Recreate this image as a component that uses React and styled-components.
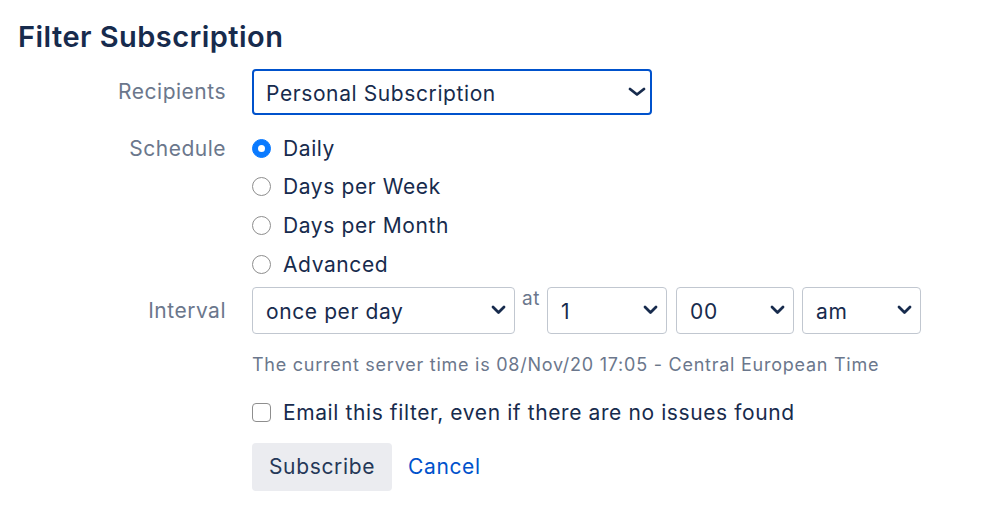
import React from "react";
import styled, { createGlobalStyle } from "styled-components";

const Global = createGlobalStyle`
  html, body { margin: 0; padding: 0; background: #ffffff; }
  body { font-family: Inter, "Noto Sans", "Liberation Sans", sans-serif; color: #172b4d; letter-spacing: 0.6px; }
  * { box-sizing: border-box; }
`;

const Page = styled.div`
  padding: 19px 18px 0 18px;
  width: 999px;
  height: 520px;
`;

const Title = styled.h2`
  margin: 0 0 14px 0;
  font-size: 29px;
  line-height: 36px;
  font-weight: 600;
  color: #172b4d;
  letter-spacing: 0.45px;
`;

const Row = styled.div`
  display: flex;
  align-items: flex-start;
  column-gap: 26px;
  margin-top: ${(p) => p.$mt || 0}px;
`;

const Label = styled.div`
  width: 208px;
  flex: none;
  text-align: right;
  font-size: 21px;
  letter-spacing: 0.5px;
  color: #6b778c;
  line-height: ${(p) => p.$lh}px;
`;

const Field = styled.div`
  flex: 1;
  display: flex;
  align-items: flex-start;
`;

const SelectWrap = styled.div`
  position: relative;
  width: ${(p) => p.$w}px;
  height: ${(p) => p.$h}px;
  flex: none;
`;

const NativeSelect = styled.select`
  appearance: none;
  -webkit-appearance: none;
  width: 100%;
  height: 100%;
  margin: 0;
  padding: 2px 36px 0 ${(p) => (p.$focus ? 12 : 13)}px;
  font-family: inherit;
  font-size: 21px;
  letter-spacing: 0.6px;
  color: #172b4d;
  background: #ffffff;
  border: ${(p) => (p.$focus ? "2px solid #0052cc" : "1px solid #c1c7d0")};
  border-radius: 4px;
  outline: none;
`;

const Chevron = styled.svg`
  position: absolute;
  right: ${(p) => p.$r}px;
  top: 50%;
  margin-top: -5px;
  width: ${(p) => p.$cw}px;
  height: 10px;
  pointer-events: none;
`;

const ChevronIcon = ({ r = 9, cw = 15 }) => (
  <Chevron $r={r} $cw={cw} viewBox={`0 0 ${cw} 10`}>
    <path d={`M2 2 L${cw / 2} 7.5 L${cw - 2} 2`} fill="none" stroke="#172b4d" strokeWidth="2.8" strokeLinecap="round" strokeLinejoin="round" />
  </Chevron>
);

const Select = ({ w, h = 47, value, focus, r, cw }) => (
  <SelectWrap $w={w} $h={h}>
    <NativeSelect $focus={focus} defaultValue={value}>
      <option>{value}</option>
    </NativeSelect>
    <ChevronIcon r={r} cw={cw} />
  </SelectWrap>
);

const RadioList = styled.div`
  display: flex;
  flex-direction: column;
`;

const Option = styled.label`
  display: flex;
  align-items: center;
  height: ${(p) => p.$h || 38.67}px;
  gap: 12px;
  font-size: 21px;
  color: #172b4d;
`;

const Radio = styled.span`
  width: 19px;
  height: 19px;
  border-radius: 50%;
  flex: none;
  background: ${(p) => (p.$on ? "#0a7aff" : "#ffffff")};
  border: 1px solid ${(p) => (p.$on ? "#0a7aff" : "#8e8e8e")};
  display: flex;
  align-items: center;
  justify-content: center;
  &::after {
    content: "";
    display: ${(p) => (p.$on ? "block" : "none")};
    width: 7px;
    height: 7px;
    border-radius: 50%;
    background: #ffffff;
  }
`;

const Check = styled.span`
  width: 19px;
  height: 19px;
  flex: none;
  border-radius: 4px;
  border: 1px solid #8e8e8e;
  background: #ffffff;
`;

const At = styled.span`
  font-size: 19px;
  line-height: 24px;
  color: #6b778c;
  margin: 0 7px;
`;

const Gap = styled.span`
  width: ${(p) => p.$w}px;
  flex: none;
`;

const Hint = styled.div`
  font-size: 18px;
  line-height: 24px;
  letter-spacing: 0.75px;
  color: #6b778c;
`;

const Buttons = styled.div`
  display: flex;
  align-items: center;
  gap: 16px;
`;

const Button = styled.button`
  height: 48px;
  padding: 0 17px;
  border: none;
  border-radius: 4px;
  background: #ebecf0;
  color: #253858;
  font-family: inherit;
  font-size: 21px;
  letter-spacing: 0.65px;
`;

const LinkButton = styled.a`
  font-size: 21px;
  color: #0052cc;
  text-decoration: none;
`;

export default function App() {
  return (
    <>
      <Global />
      <Page>
        <Title>Filter Subscription</Title>
        <Row>
          <Label $lh={46}>Recipients</Label>
          <Field>
            <Select w={400} h={46} value="Personal Subscription" focus r={6} cw={18} />
          </Field>
        </Row>
        <Row $mt={14}>
          <Label $lh={39}>Schedule</Label>
          <Field>
            <RadioList>
              <Option><Radio $on />Daily</Option>
              <Option><Radio />Days per Week</Option>
              <Option><Radio />Days per Month</Option>
              <Option><Radio />Advanced</Option>
            </RadioList>
          </Field>
        </Row>
        <Row $mt={3}>
          <Label $lh={47}>Interval</Label>
          <Field>
            <Select w={263} value="once per day" />
            <At>at</At>
            <Select w={120} value="1" />
            <Gap $w={9} />
            <Select w={118} value="00" />
            <Gap $w={8} />
            <Select w={119} value="am" />
          </Field>
        </Row>
        <Row $mt={19}>
          <Label />
          <Field>
            <Hint>The current server time is 08/Nov/20 17:05 - Central European Time</Hint>
          </Field>
        </Row>
        <Row $mt={21}>
          <Label />
          <Field>
            <Option $h={30}><Check />Email this filter, even if there are no issues found</Option>
          </Field>
        </Row>
        <Row $mt={15}>
          <Label />
          <Field>
            <Buttons>
              <Button>Subscribe</Button>
              <LinkButton href="#">Cancel</LinkButton>
            </Buttons>
          </Field>
        </Row>
      </Page>
    </>
  );
}
